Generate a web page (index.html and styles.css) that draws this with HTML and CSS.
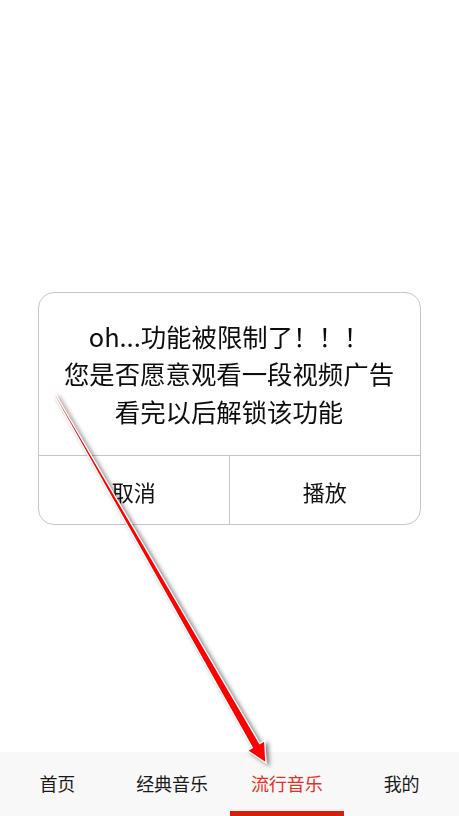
FILE: index.html
```html
<!DOCTYPE html>
<html lang="zh-CN">
<head>
<meta charset="utf-8">
<title>流行音乐</title>
<link rel="stylesheet" href="styles.css">
</head>
<body>
<div class="app">
  <main class="content"></main>
  <nav class="tabbar">
    <a class="tab">首页</a>
    <a class="tab">经典音乐</a>
    <a class="tab tab-active">流行音乐</a>
    <a class="tab">我的</a>
  </nav>
</div>

<div class="modal">
  <div class="dialog">
    <div class="dialog-body">
      <p>oh...功能被限制了！！！</p>
      <p>您是否愿意观看一段视频广告</p>
      <p>看完以后解锁该功能</p>
    </div>
    <div class="dialog-actions">
      <button class="dialog-btn">取消</button>
      <button class="dialog-btn">播放</button>
    </div>
  </div>
</div>

<svg class="pointer" width="459" height="816" viewBox="0 0 459 816" aria-hidden="true">
  <polygon class="pointer-arrow"
    points="54.3,395.4 252.3,747.7 247.3,750.6 266,763 264.7,740.6 259.7,743.5 55.7,394.6"/>
</svg>
</body>
</html>
```

FILE: styles.css
```css
* {
  box-sizing: border-box;
}

html, body {
  margin: 0;
  padding: 0;
  background: #ffffff;
}

body {
  font-family: "Noto Sans CJK SC", "Noto Sans", sans-serif;
  color: #111111;
}

.app {
  width: 459px;
  height: 816px;
  display: flex;
  flex-direction: column;
}

.content {
  flex: 1;
}

.tabbar {
  height: 64px;
  background: #f8f8f8;
  display: grid;
  grid-template-columns: repeat(4, 1fr);
}

.tab {
  display: flex;
  align-items: center;
  justify-content: center;
  font-size: 18px;
  color: #1a1a1a;
  border-bottom: 5px solid transparent;
  padding-top: 3px;
}

.tab-active {
  color: #e2321f;
  border-bottom-color: #d81e06;
}

/* modal layer */
.modal {
  position: fixed;
  inset: 0;
  display: flex;
  align-items: center;
  justify-content: center;
}

.dialog {
  width: 383px;
  height: 233px;
  margin-right: 1px;
  background: #ffffff;
  border: 1px solid #c6c6c6;
  border-radius: 16px;
  display: flex;
  flex-direction: column;
  overflow: hidden;
}

.dialog-body {
  padding: 25px 0 25px;
  text-align: center;
  font-size: 25.4px;
  line-height: 37.5px;
  color: #0d0d0d;
}

.dialog-body p {
  margin: 0;
}

.dialog-actions {
  flex: 1;
  display: grid;
  grid-template-columns: 1fr 1fr;
  border-top: 1px solid #c6c6c6;
}

.dialog-btn {
  font-family: inherit;
  font-size: 22px;
  color: #111111;
  background: none;
  border: none;
  padding: 0;
  padding-top: 2px;
}

.dialog-btn + .dialog-btn {
  border-left: 1px solid #c6c6c6;
}

/* annotation arrow drawn over the page */
.pointer {
  position: fixed;
  left: 0;
  top: 0;
  pointer-events: none;
  filter: drop-shadow(3px 2px 2px rgba(0, 0, 0, 0.45));
}

.pointer-arrow {
  fill: #ff0000;
  stroke: #ffffff;
  stroke-width: 1.4;
  stroke-linejoin: miter;
}
```
